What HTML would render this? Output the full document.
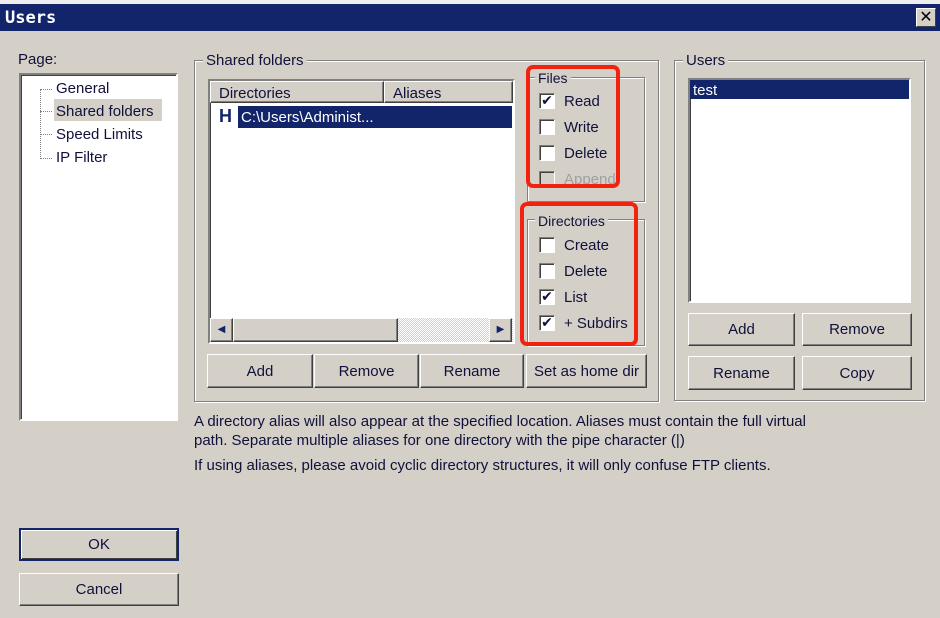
<!DOCTYPE html>
<html><head><meta charset="utf-8"><style>
*{box-sizing:border-box;margin:0;padding:0}
body{width:940px;height:618px;background:#d4d0c8;font-family:"Liberation Sans",sans-serif;font-size:15px;color:#10103a;position:relative;overflow:hidden}
.a{position:absolute}
.title{left:0;top:4px;width:940px;height:27px;background:#12246a;color:#fff;font-family:"DejaVu Sans Mono","Liberation Mono",monospace;font-weight:bold;font-size:17px;padding:4px 0 0 5px;letter-spacing:0px}
.topline{left:0;top:0;width:940px;height:4px;background:#eeeeee}
.close{left:916px;top:8px;width:20px;height:19px;background:#d4d0c8;border:1px solid;border-color:#fff #404040 #404040 #fff;color:#000;font-size:16px;font-weight:bold;text-align:center;line-height:16px;font-family:"DejaVu Sans",sans-serif}
.sunk{background:#fff;border:2px solid;border-color:#808080 #fff #fff #808080;box-shadow:inset 1px 1px 0 #404040}
.grp{border:1px solid #808080;box-shadow:1px 1px 0 #fff, inset 1px 1px 0 #fff}
.lbl{background:#d4d0c8;padding:0 3px}
.btn{border:1px solid;border-color:#fff #404040 #404040 #fff;box-shadow:inset -1px -1px 0 #808080;text-align:center;background:#d4d0c8}
.cb{width:16px;height:16px;background:#fff;border:1px solid;border-color:#808080 #fff #fff #808080;box-shadow:inset 1px 1px 0 #404040;font-size:14px;line-height:14px;text-align:center;color:#10103a;font-family:"DejaVu Sans",sans-serif}
.red{border:4px solid #f2230e;border-radius:7px}
.t{margin-top:1px}
</style></head><body>
<div class="a topline"></div>
<div class="a title">Users</div>
<div class="a close">✕</div>

<div class="a" style="left:18px;top:51px">Page:</div>
<div class="a sunk" style="left:19px;top:73px;width:159px;height:348px"></div>
<div class="a" style="left:40px;top:90px;height:69px;border-left:1px dotted #808080"></div>
<div class="a" style="left:40px;top:89px;width:12px;border-top:1px dotted #808080"></div>
<div class="a" style="left:40px;top:111px;width:12px;border-top:1px dotted #808080"></div>
<div class="a" style="left:40px;top:134px;width:12px;border-top:1px dotted #808080"></div>
<div class="a" style="left:40px;top:158px;width:12px;border-top:1px dotted #808080"></div>
<div class="a" style="left:56px;top:80px">General</div>
<div class="a" style="left:54px;top:99px;width:108px;height:22px;background:#d4d0c8"></div>
<div class="a" style="left:56px;top:103px">Shared folders</div>
<div class="a" style="left:56px;top:126px">Speed Limits</div>
<div class="a" style="left:56px;top:149px">IP Filter</div>

<div class="a grp" style="left:194px;top:60px;width:465px;height:342px"></div>
<div class="a lbl" style="left:203px;top:52px">Shared folders</div>
<div class="a sunk" style="left:208px;top:79px;width:307px;height:265px"></div>
<div class="a btn" style="left:210px;top:81px;width:174px;height:22px;text-align:left;padding:3px 0 0 8px">Directories</div>
<div class="a btn" style="left:384px;top:81px;width:129px;height:22px;text-align:left;padding:3px 0 0 8px">Aliases</div>
<div class="a" style="left:219px;top:106px;font-weight:bold;font-size:18px;color:#12246a">H</div>
<div class="a" style="left:238px;top:106px;width:274px;height:22px;background:#12246a;color:#fff;padding:3px 0 0 3px">C:\Users\Administ...</div>
<div class="a" style="left:210px;top:318px;width:303px;height:24px;background:repeating-conic-gradient(#d4d0c8 0 25%,#fff 0 50%) 0 0/2px 2px"></div>
<div class="a btn" style="left:210px;top:318px;width:23px;height:24px;font-size:10px;line-height:22px;color:#12246a">◀</div>
<div class="a btn" style="left:233px;top:318px;width:165px;height:24px"></div>
<div class="a btn" style="left:489px;top:318px;width:23px;height:24px;font-size:10px;line-height:22px;color:#12246a">▶</div>

<div class="a grp" style="left:527px;top:77px;width:118px;height:125px"></div>
<div class="a lbl" style="left:535px;top:70px;font-size:14px">Files</div>
<div class="a cb" style="left:539px;top:93px">✔</div>
<div class="a" style="left:564px;top:93px">Read</div>
<div class="a cb" style="left:539px;top:119px"></div>
<div class="a" style="left:564px;top:119px">Write</div>
<div class="a cb" style="left:539px;top:145px"></div>
<div class="a" style="left:564px;top:145px">Delete</div>
<div class="a cb" style="left:539px;top:171px;background:#d4d0c8"></div>
<div class="a" style="left:564px;top:171px;color:#a0a0a0">Append</div>
<div class="a red" style="left:526px;top:65px;width:94px;height:123px"></div>

<div class="a grp" style="left:527px;top:219px;width:118px;height:127px"></div>
<div class="a lbl" style="left:535px;top:213px;font-size:14px">Directories</div>
<div class="a cb" style="left:539px;top:237px"></div>
<div class="a" style="left:564px;top:237px">Create</div>
<div class="a cb" style="left:539px;top:263px"></div>
<div class="a" style="left:564px;top:263px">Delete</div>
<div class="a cb" style="left:539px;top:289px">✔</div>
<div class="a" style="left:564px;top:289px">List</div>
<div class="a cb" style="left:539px;top:315px">✔</div>
<div class="a" style="left:564px;top:315px">+ Subdirs</div>
<div class="a red" style="left:520px;top:202px;width:118px;height:144px"></div>

<div class="a btn" style="left:207px;top:354px;width:106px;height:34px;line-height:33px">Add</div>
<div class="a btn" style="left:314px;top:354px;width:105px;height:34px;line-height:33px">Remove</div>
<div class="a btn" style="left:420px;top:354px;width:104px;height:34px;line-height:33px">Rename</div>
<div class="a btn" style="left:526px;top:354px;width:121px;height:34px;line-height:33px">Set as home dir</div>

<div class="a grp" style="left:674px;top:60px;width:251px;height:341px"></div>
<div class="a lbl" style="left:683px;top:52px">Users</div>
<div class="a sunk" style="left:688px;top:78px;width:223px;height:225px"></div>
<div class="a" style="left:690px;top:80px;width:219px;height:19px;background:#12246a;color:#fff;padding:2px 0 0 3px">test</div>
<div class="a btn" style="left:688px;top:313px;width:107px;height:33px;line-height:32px">Add</div>
<div class="a btn" style="left:802px;top:313px;width:110px;height:33px;line-height:32px">Remove</div>
<div class="a btn" style="left:688px;top:356px;width:107px;height:34px;line-height:33px">Rename</div>
<div class="a btn" style="left:802px;top:356px;width:110px;height:34px;line-height:33px">Copy</div>

<div class="a" style="left:194px;top:412px;font-size:15px;line-height:19px;width:700px">A directory alias will also appear at the specified location. Aliases must contain the full virtual<br>path. Separate multiple aliases for one directory with the pipe character (|)</div>
<div class="a" style="left:194px;top:457px;font-size:15px;white-space:nowrap">If using aliases, please avoid cyclic directory structures, it will only confuse FTP clients.</div>

<div class="a btn" style="left:19px;top:528px;width:160px;height:33px;line-height:30px;border:2px solid #12246a;box-shadow:inset 1px 1px 0 #fff,inset -1px -1px 0 #404040">OK</div>
<div class="a btn" style="left:19px;top:573px;width:160px;height:33px;line-height:32px">Cancel</div>
</body></html>
